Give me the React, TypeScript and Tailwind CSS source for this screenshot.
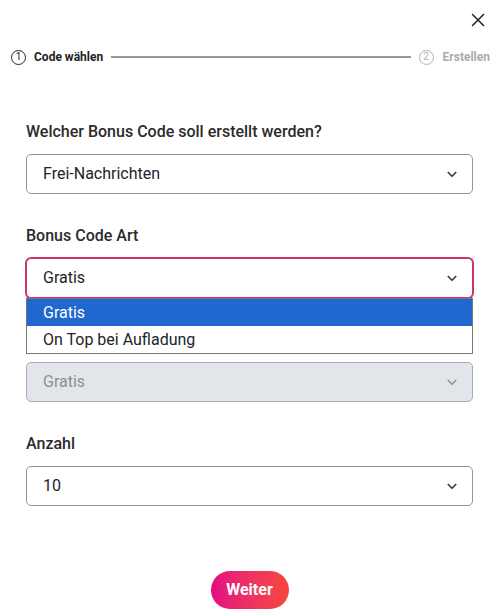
import React from "react";

const Chevron = ({ muted }: { muted?: boolean }) => (
  <svg
    width="12"
    height="12"
    viewBox="0 0 16 16"
    fill="none"
    stroke={muted ? "#8d949b" : "#343a40"}
    strokeWidth="2.2"
    strokeLinecap="round"
    strokeLinejoin="round"
  >
    <path d="M3 6l5 5 5-5" />
  </svg>
);

interface SelectBoxProps {
  value: string;
  focused?: boolean;
  disabled?: boolean;
}

const SelectBox: React.FC<SelectBoxProps> = ({ value, focused, disabled }) => (
  <div
    className={`flex h-10 items-center justify-between rounded-[5px] pl-[16px] pr-[14px] text-base ${
      disabled
        ? "border border-[#a4acb4] bg-[#e2e6ea] text-[#8a9096]"
        : focused
          ? "border border-[#d0336e] bg-white text-[#212529] shadow-[0_0_0_1px_#d0336e]"
          : "border border-[#8e979f] bg-white text-[#212529]"
    }`}
  >
    <span>{value}</span>
    <Chevron muted={disabled} />
  </div>
);

export default function App() {
  return (
    <div
      className="relative h-[616px] w-[499px] overflow-hidden bg-white"
      style={{ fontFamily: "Roboto, 'Liberation Sans', sans-serif" }}
    >
      <div className="flex justify-end pr-[14px] pt-[13px]">
        <svg width="14" height="14" viewBox="0 0 14 14" stroke="#222" strokeWidth="1.5" strokeLinecap="round">
          <path d="M1.5 1.5l11 11M12.5 1.5l-11 11" />
        </svg>
      </div>

      <div className="mt-[21px] flex items-center pl-[11px] pr-[9px]">
        <span className="flex h-[15px] w-[15px] items-center justify-center rounded-full border border-[#222] text-[10px] leading-none text-[#222]">
          1
        </span>
        <span className="ml-[8px] text-[12px] font-bold text-[#222]">Code wählen</span>
        <div className="mx-[8px] h-[2px] flex-1 bg-[#8c9aa5]" />
        <span className="flex h-[15px] w-[15px] items-center justify-center rounded-full border border-[#b3b3b3] text-[10px] leading-none text-[#b3b3b3]">
          2
        </span>
        <span className="ml-[9px] text-[12px] font-bold text-[#ababab]">Erstellen</span>
      </div>

      <div className="px-[26px] pt-[54px]">
        <div className="text-base font-medium leading-6 text-[#2b2b2b]">
          Welcher Bonus Code soll erstellt werden?
        </div>
        <div className="mt-[10px]">
          <SelectBox value="Frei-Nachrichten" />
        </div>

        <div className="mt-[30px] text-base font-medium leading-6 text-[#2b2b2b]">Bonus Code Art</div>
        <div className="relative mt-[10px]">
          <SelectBox value="Gratis" focused />
          <div className="absolute left-0 right-0 top-[40px] z-10 border border-[#767676] bg-white text-base text-[#212529]">
            <div className="flex h-[27px] items-center bg-[#2067d0] pl-[16px] text-white">Gratis</div>
            <div className="flex h-[27px] items-center pl-[16px]">On Top bei Aufladung</div>
          </div>
        </div>

        <div className="mt-[30px] h-6" />
        <div className="mt-[10px]">
          <SelectBox value="Gratis" disabled />
        </div>

        <div className="mt-[30px] text-base font-medium leading-6 text-[#2b2b2b]">Anzahl</div>
        <div className="mt-[10px]">
          <SelectBox value="10" />
        </div>

        <div className="mt-[65px] flex justify-center">
          <button
            type="button"
            className="h-[38px] w-[78px] rounded-full bg-gradient-to-r from-[#e5067f] to-[#f7453b] text-base font-bold text-white"
          >
            Weiter
          </button>
        </div>
      </div>
    </div>
  );
}
